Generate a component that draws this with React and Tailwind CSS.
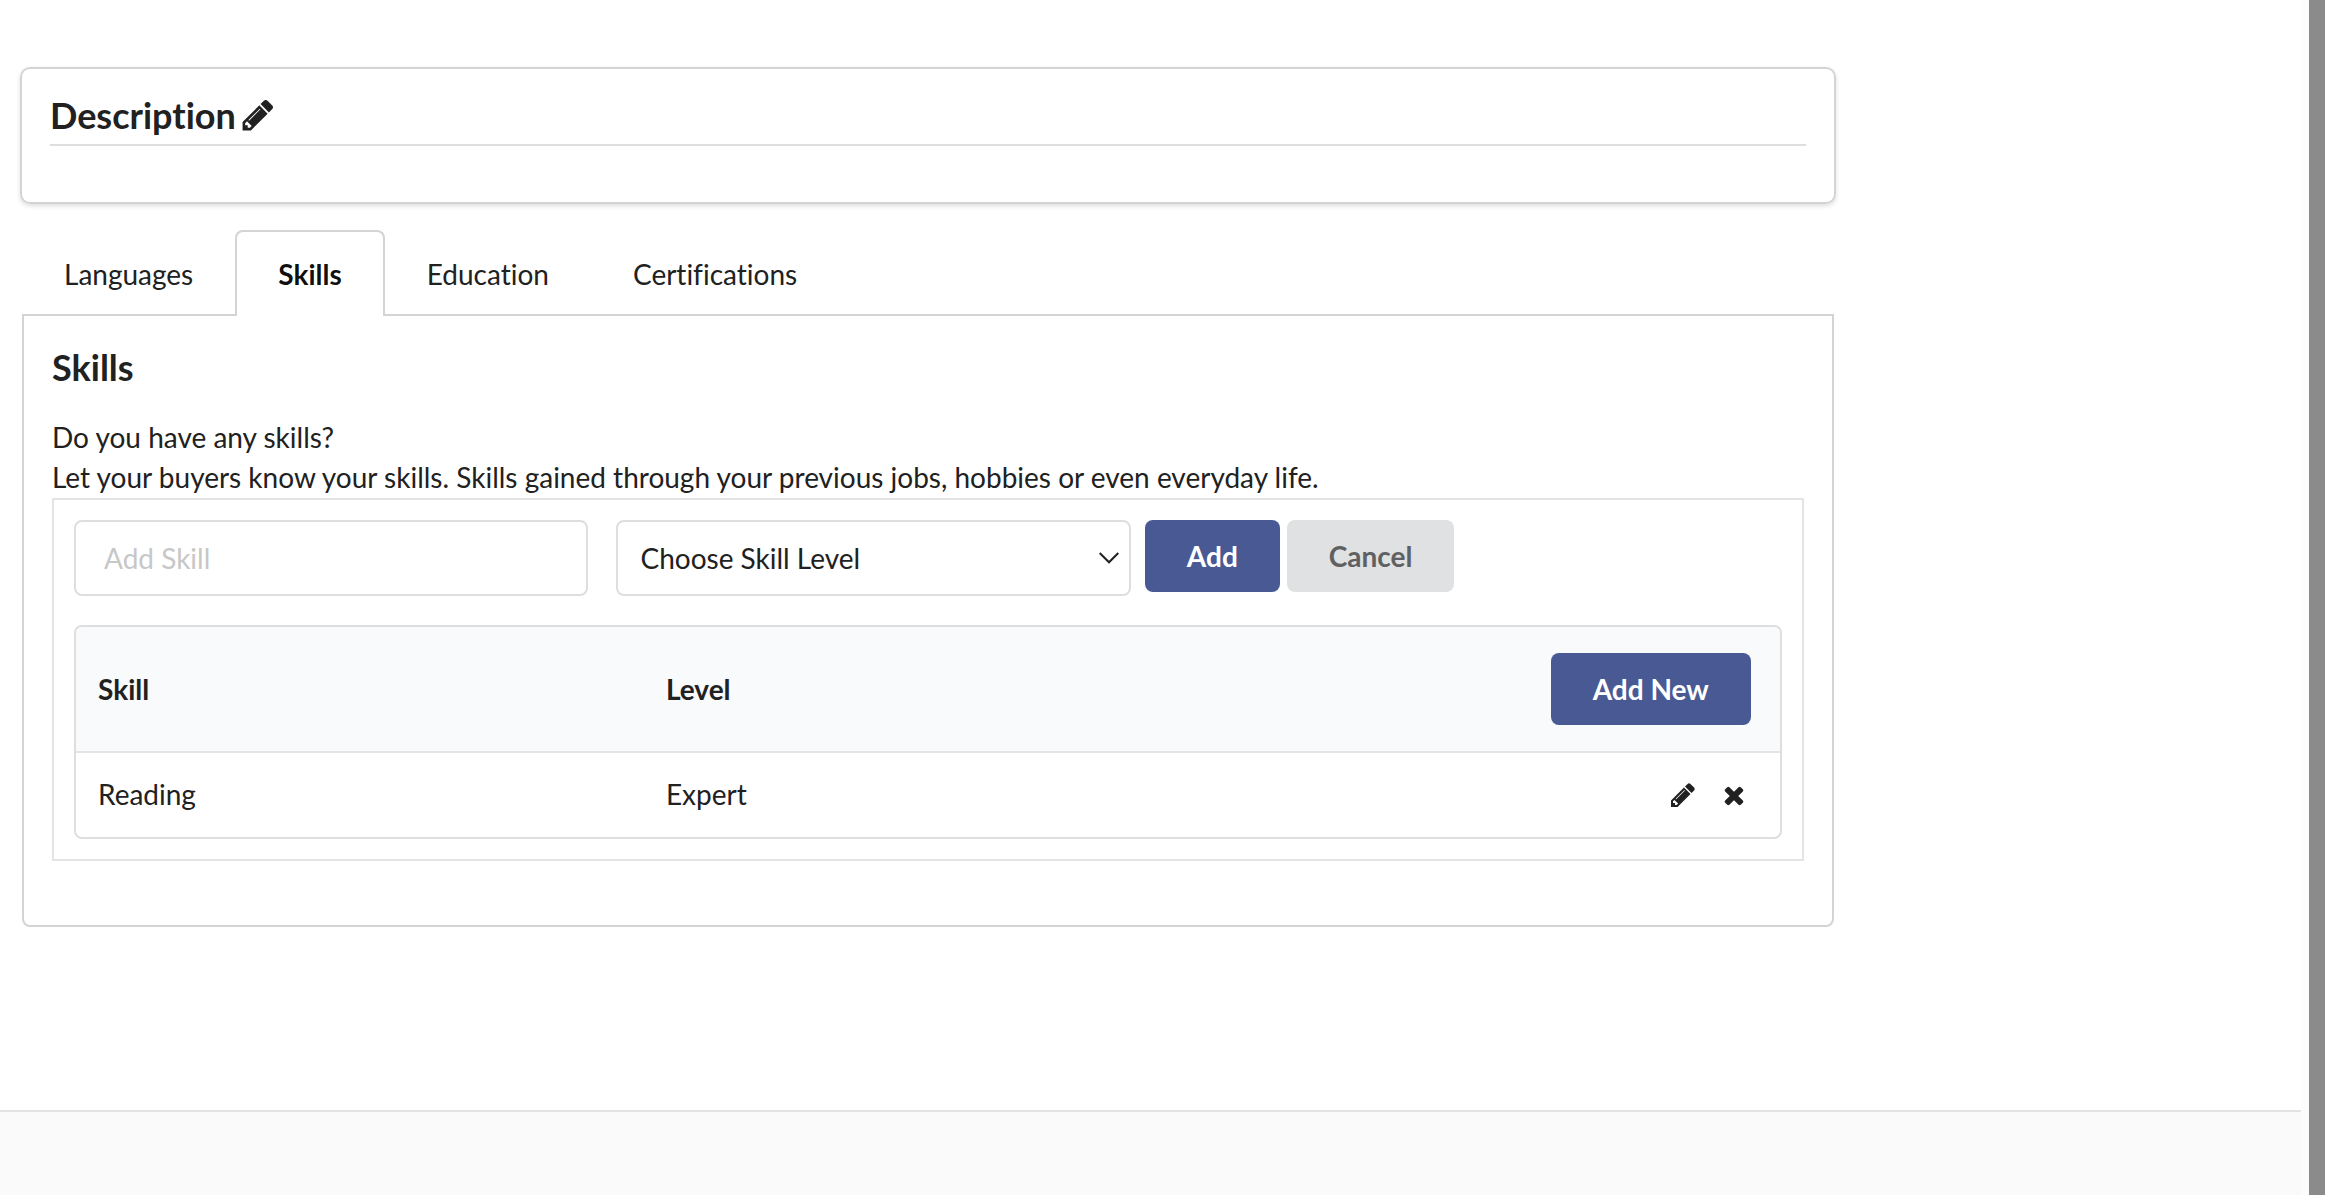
import React, { useState } from "react";

const PENCIL =
  "M491 1536l91-91-235-235-91 91v107h128v128h107zM1014 608q0-22-22-22-10 0-17 7l-542 542q-7 7-7 17 0 22 22 22 10 0 17-7l542-542q7-7 7-17zM960 416l416 416-832 832h-416v-416zM1643 512q0 53-37 90l-166 166-416-416 166-165q36-38 90-38 53 0 91 38l235 234q37 39 37 91z";
const CROSS =
  "M1490 1322q0 40-28 68l-136 136q-28 28-68 28t-68-28l-294-294-294 294q-28 28-68 28t-68-28l-136-136q-28-28-28-68t28-68l294-294-294-294q-28-28-28-68t28-68l136-136q28-28 68-28t68 28l294 294 294-294q28-28 68-28t68 28l136 136q28 28 28 68t-28 68l-294 294 294 294q28 28 28 68z";

function Icon({ path, className }) {
  return (
    <svg viewBox="0 0 1792 1792" fill="currentColor" aria-hidden="true" className={className}>
      <path d={path} />
    </svg>
  );
}

const buttonBase = "h-[72px] cursor-pointer rounded-lg px-[42px] text-[28px] leading-7 font-bold";
const primary = "bg-[#485993] text-white";
const neutral = "bg-[#e0e1e2] text-[#5f6062]";

function Button({ tone, children }) {
  return (
    <button type="button" className={`${buttonBase} ${tone}`}>
      {children}
    </button>
  );
}

function DescriptionCard() {
  return (
    <section className="h-[137px] rounded-[10px] border-2 border-[#d4d4d5] px-7 pt-6 shadow-[0_2px_4px_rgba(34,36,38,0.15)]">
      <div className="flex h-[53px] border-b-2 border-[#dededf]">
        <h3 className="text-[36px] leading-[44px] font-bold">Description</h3>
        <button type="button" aria-label="Edit description" className="ml-1 h-9 cursor-pointer pt-1">
          <Icon path={PENCIL} className="size-9" />
        </button>
      </div>
    </section>
  );
}

const TABS = ["Languages", "Skills", "Education", "Certifications"];

function Tabs({ active, onSelect }) {
  return (
    <div role="tablist" className="relative -mb-0.5 flex">
      {TABS.map((tab) => (
        <button
          key={tab}
          type="button"
          role="tab"
          aria-selected={tab === active}
          onClick={() => onSelect(tab)}
          className={
            tab === active
              ? "h-[86px] cursor-pointer rounded-t-lg border-2 border-b-0 border-[#d4d4d5] bg-white px-[41px] font-bold text-black/95"
              : "h-[86px] cursor-pointer border-2 border-b-0 border-transparent px-10"
          }
        >
          {tab}
        </button>
      ))}
    </div>
  );
}

function SkillForm() {
  const field = "h-[76px] w-full rounded-lg border-2 border-[#dededf] bg-white text-[28px]";
  return (
    <form className="grid grid-cols-16 gap-7" onSubmit={(e) => e.preventDefault()}>
      <div className="col-span-5">
        <input
          type="text"
          aria-label="Add Skill"
          placeholder="Add Skill"
          className={`${field} px-7 placeholder:text-[#c7c7c7]`}
        />
      </div>
      <div className="relative col-span-5">
        <select aria-label="Choose Skill Level" defaultValue="" className={`${field} appearance-none pl-[22px]`}>
          <option value="">Choose Skill Level</option>
          <option>Beginner</option>
          <option>Intermediate</option>
          <option>Expert</option>
        </select>
        <svg
          viewBox="0 0 20 12"
          fill="none"
          stroke="currentColor"
          strokeWidth="2"
          aria-hidden="true"
          className="pointer-events-none absolute top-8 right-3 h-3 w-5"
        >
          <path d="M0.7 1l9.3 9.3L19.3 1" />
        </svg>
      </div>
      <div className="col-span-6 -ml-3.5 flex items-start gap-[7px]">
        <Button tone={primary}>Add</Button>
        <Button tone={neutral}>Cancel</Button>
      </div>
    </form>
  );
}

function SkillTable() {
  return (
    <div className="mt-[29px] overflow-hidden rounded-lg border-2 border-[#dededf]">
      <table className="w-full table-fixed">
        <thead>
          <tr className="h-[125px] border-b-2 border-[#e4e5e6] bg-[#f9fafb] text-left">
            <th className="px-[22px] font-bold">Skill</th>
            <th className="px-[22px] font-bold">Level</th>
            <th className="pr-[29px] text-right">
              <Button tone={primary}>Add New</Button>
            </th>
          </tr>
        </thead>
        <tbody>
          <tr className="h-[85px]">
            <td className="px-[22px] pb-0.5">Reading</td>
            <td className="px-[22px] pb-0.5">Expert</td>
            <td className="pr-8">
              <div className="flex justify-end gap-[23px]">
                <button type="button" aria-label="Edit skill" className="cursor-pointer">
                  <Icon path={PENCIL} className="size-7" />
                </button>
                <button type="button" aria-label="Delete skill" className="cursor-pointer">
                  <Icon path={CROSS} className="size-7" />
                </button>
              </div>
            </td>
          </tr>
        </tbody>
      </table>
    </div>
  );
}

export default function App() {
  const [active, setActive] = useState("Skills");
  return (
    <div className="flex min-h-screen bg-white font-['Lato',sans-serif] text-[28px] leading-10 text-[#212121] [font-variant-ligatures:none]">
      <div className="flex min-w-0 flex-1 flex-col">
        <main className="w-4/5 pt-[67px] pr-[5px] pb-[183px] pl-5">
          <DescriptionCard />
          <div className="mx-0.5 mt-[26px]">
            <Tabs active={active} onSelect={setActive} />
            <section role="tabpanel" className="rounded-b-lg border-2 border-[#d4d4d5] px-7 pt-7 pb-16">
              <h3 className="text-[36px] leading-[46px] font-bold">Skills</h3>
              <p className="mt-[27px]">Do you have any skills?</p>
              <p>Let your buyers know your skills. Skills gained through your previous jobs, hobbies or even everyday life.</p>
              <div className="mt-px border-2 border-[#e4e4e5] p-5">
                <SkillForm />
                <SkillTable />
              </div>
            </section>
          </div>
        </main>
        <footer className="flex-1 border-t-2 border-[#e3e3e3] bg-[#fafafa]" />
      </div>
      <div className="w-2 bg-[#fcfcfc]" />
      <div className="w-4 bg-[#8b8b8b]" />
    </div>
  );
}
